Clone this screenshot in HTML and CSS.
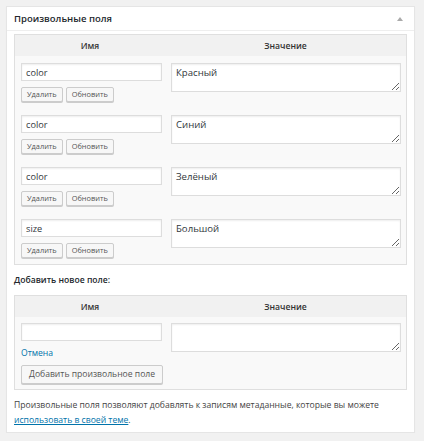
FILE: index.html
```html
<!DOCTYPE html>
<html>
<head>
    <meta charset="UTF-8">
    <title>Произвольные поля</title>
    <link rel="stylesheet" href="styles.css">
</head>
<body>
    <div class="postbox">
        <div class="postbox-header">
            <h2>Произвольные поля</h2>
            <span class="toggle"></span>
        </div>

        <div class="inside">
            <div class="meta-table">
                <div class="meta-head">
                    <div>Имя</div>
                    <div>Значение</div>
                </div>
                <div class="meta-row">
                    <div class="key-cell">
                        <input type="text" value="color">
                        <div class="actions">
                            <button class="button small">Удалить</button>
                            <button class="button small">Обновить</button>
                        </div>
                    </div>
                    <div class="value-cell"><textarea>Красный</textarea></div>
                </div>
                <div class="meta-row">
                    <div class="key-cell">
                        <input type="text" value="color">
                        <div class="actions">
                            <button class="button small">Удалить</button>
                            <button class="button small">Обновить</button>
                        </div>
                    </div>
                    <div class="value-cell"><textarea>Синий</textarea></div>
                </div>
                <div class="meta-row">
                    <div class="key-cell">
                        <input type="text" value="color">
                        <div class="actions">
                            <button class="button small">Удалить</button>
                            <button class="button small">Обновить</button>
                        </div>
                    </div>
                    <div class="value-cell"><textarea>Зелёный</textarea></div>
                </div>
                <div class="meta-row">
                    <div class="key-cell">
                        <input type="text" value="size">
                        <div class="actions">
                            <button class="button small">Удалить</button>
                            <button class="button small">Обновить</button>
                        </div>
                    </div>
                    <div class="value-cell"><textarea>Большой</textarea></div>
                </div>
            </div>

            <p class="new-title">Добавить новое поле:</p>

            <div class="meta-table">
                <div class="meta-head">
                    <div>Имя</div>
                    <div>Значение</div>
                </div>
                <div class="meta-row new-row">
                    <div class="key-cell">
                        <input type="text" value="">
                        <a href="#" class="cancel">Отмена</a>
                        <div class="actions">
                            <button class="button">Добавить произвольное поле</button>
                        </div>
                    </div>
                    <div class="value-cell"><textarea></textarea></div>
                </div>
            </div>

            <p class="note">Произвольные поля позволяют добавлять к записям метаданные, которые вы можете <a href="#">использовать в своей теме</a>.</p>
        </div>
    </div>
</body>
</html>
```

FILE: styles.css
```css
* {
    box-sizing: border-box;
}

body {
    margin: 0;
    padding: 6px 9px 0 6px;
    background: #f1f1f1;
    font-family: "Open Sans", "Liberation Sans", sans-serif;
    font-size: 8.6px;
    color: #444;
}

.postbox {
    background: #fff;
    border: 1px solid #e5e5e5;
    box-shadow: 0 1px 1px rgba(0, 0, 0, 0.04);
}

.postbox-header {
    display: flex;
    justify-content: space-between;
    align-items: center;
    height: 24px;
    padding: 0 7px;
    border-bottom: 1px solid #eee;
}

.postbox-header h2 {
    margin: 0;
    font-size: 9.5px;
    font-weight: 600;
    color: #23282d;
}

.toggle {
    width: 0;
    height: 0;
    margin-right: 4px;
    border-left: 3px solid transparent;
    border-right: 3px solid transparent;
    border-bottom: 4px solid #aaa;
}

.inside {
    padding: 3px 7px 4px;
}

.meta-table {
    border: 1px solid #dfdfdf;
    background: #f9f9f9;
}

.meta-head,
.meta-row {
    display: grid;
    grid-template-columns: 150px 1fr;
}

.meta-head {
    height: 21px;
    align-items: center;
    background: #f1f1f1;
    text-align: center;
    font-weight: 600;
    color: #333;
}

.key-cell {
    padding: 7px 3px 6px 6px;
}

.value-cell {
    padding: 7px 5px 0 6px;
}

.new-row .key-cell {
    padding: 6px 3px 5px 6px;
}

.new-row .value-cell {
    padding-top: 6px;
}

input[type="text"],
textarea {
    display: block;
    width: 100%;
    margin: 0;
    border: 1px solid #ddd;
    box-shadow: inset 0 1px 2px rgba(0, 0, 0, 0.07);
    background: #fff;
    color: #32373c;
    font-family: inherit;
    outline: none;
}

input[type="text"] {
    height: 18px;
    padding: 0 4px;
    font-size: 9.2px;
}

textarea {
    height: 29px;
    padding: 2px 4px;
    font-size: 9.6px;
    line-height: 14px;
    resize: vertical;
}

.actions {
    display: flex;
    gap: 3px;
    margin-top: 6px;
}

.new-row .actions {
    margin-top: 5px;
}

.button {
    height: 19px;
    padding: 0 7px;
    border: 1px solid #ccc;
    border-radius: 2px;
    background: #f7f7f7;
    box-shadow: 0 1px 0 #ccc;
    color: #555;
    font-family: inherit;
    font-size: 8.6px;
    line-height: 17px;
    white-space: nowrap;
    cursor: pointer;
}

.button.small {
    height: 15px;
    padding: 0 5px;
    font-size: 7.4px;
    line-height: 13px;
}

.cancel {
    display: block;
    margin-top: 5px;
    line-height: 14px;
    color: #0073aa;
    text-decoration: none;
}

.new-title {
    margin: 8px 0;
    line-height: 14px;
    font-weight: 600;
    color: #23282d;
}

.note {
    margin: 8px 0 0;
    line-height: 15px;
}

.note a {
    color: #0073aa;
}
```
